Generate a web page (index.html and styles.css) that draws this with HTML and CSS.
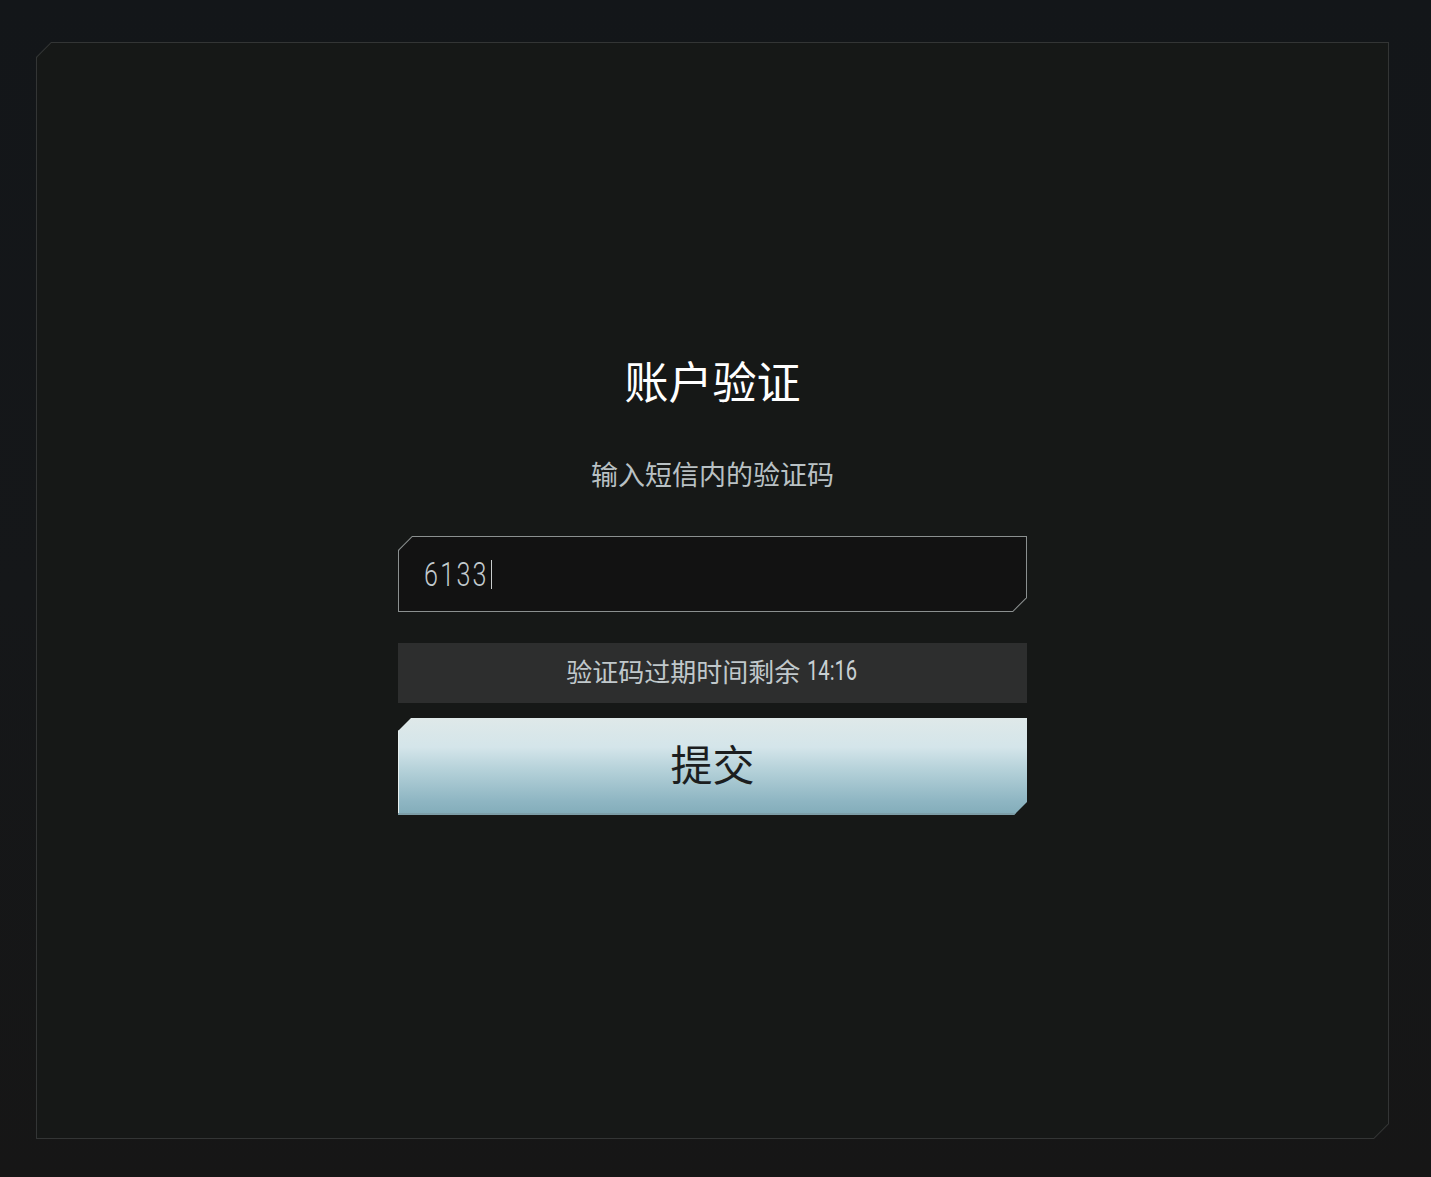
FILE: index.html
```html
<!DOCTYPE html>
<html lang="zh-CN">
<head>
<meta charset="utf-8">
<title>账户验证</title>
<link rel="stylesheet" href="styles.css">
</head>
<body>
<div class="frame">
  <div class="panel">
    <h1 class="title">账户验证</h1>
    <p class="subtitle">输入短信内的验证码</p>
    <div class="field">
      <div class="field-inner">
        <span class="code">6133</span><span class="caret"></span>
      </div>
    </div>
    <div class="timer">验证码过期时间剩余 <span class="num">14:16</span></div>
    <button class="submit" type="button">提交</button>
  </div>
</div>
</body>
</html>
```
FILE: styles.css
```css
html, body {
  margin: 0;
  height: 100%;
}
body {
  box-sizing: border-box;
  padding: 42px 42px 38px 36px;
  background: linear-gradient(180deg, #131619 0%, #151719 50%, #161616 100%);
  font-family: "Noto Sans CJK SC", "Noto Sans", sans-serif;
}
.frame {
  height: 100%;
  background: #333535;
  padding: 1px;
  box-sizing: border-box;
  clip-path: polygon(15px 0, 100% 0, 100% calc(100% - 15px), calc(100% - 15px) 100%, 0 100%, 0 15px);
}
.panel {
  height: 100%;
  box-sizing: border-box;
  background: #161817;
  clip-path: polygon(14.4px 0, 100% 0, 100% calc(100% - 14.4px), calc(100% - 14.4px) 100%, 0 100%, 0 14.4px);
  display: flex;
  flex-direction: column;
  align-items: center;
  padding-top: 311px;
}
.title {
  margin: 0;
  font-size: 44px;
  line-height: 52px;
  font-weight: 400;
  color: #ffffff;
}
.subtitle {
  margin: 50px 0 0;
  font-size: 27px;
  line-height: 36px;
  color: #b9c1c4;
}
.field {
  margin-top: 44px;
  width: 629px;
  height: 76px;
  padding: 1px;
  box-sizing: border-box;
  background: #8b9090;
  clip-path: polygon(14px 0, 100% 0, 100% calc(100% - 14px), calc(100% - 14px) 100%, 0 100%, 0 14px);
}
.field-inner {
  height: 100%;
  background: #121212;
  clip-path: polygon(13.4px 0, 100% 0, 100% calc(100% - 13.4px), calc(100% - 13.4px) 100%, 0 100%, 0 13.4px);
  display: flex;
  align-items: center;
  padding-left: 25px;
}
.code {
  display: inline-block;
  font-family: "Roboto", "Liberation Sans", sans-serif;
  font-weight: 300;
  font-size: 33px;
  letter-spacing: 3px;
  color: #c2cace;
  transform: scaleX(0.76);
  transform-origin: left center;
  margin-right: -19px;
}
.caret {
  display: inline-block;
  width: 1px;
  height: 29px;
  background: #c8cccc;
  margin-left: 1px;
}
.timer {
  margin-top: 31px;
  width: 629px;
  height: 60px;
  box-sizing: border-box;
  padding-bottom: 5px;
  background: #2d2e2e;
  display: flex;
  align-items: center;
  justify-content: center;
  font-size: 26px;
  color: #c0c8cb;
}
.num {
  display: inline-block;
  font-family: "Roboto", "Liberation Sans", sans-serif;
  font-size: 28px;
  color: #c8d0d3;
  transform: scaleX(0.72);
  transform-origin: left center;
  margin-left: 7px;
  margin-right: -18px;
}
.submit {
  margin-top: 15px;
  width: 629px;
  height: 97px;
  border: 0;
  padding: 0 0 8px;
  font-family: "Noto Sans CJK SC", sans-serif;
  font-size: 42px;
  color: #1c1e1f;
  background: linear-gradient(180deg, #dfe9e9 0%, #d4e5ea 30%, #b3d0d8 55%, #8fb6c3 85%, #82acb9 100%);
  clip-path: polygon(13px 0, 100% 0, 100% calc(100% - 13px), calc(100% - 13px) 100%, 0 100%, 0 13px);
  box-shadow: inset 0 -2px 0 #7d9ea8, inset 1px 0 0 #e8f0f0;
  cursor: pointer;
}
```
